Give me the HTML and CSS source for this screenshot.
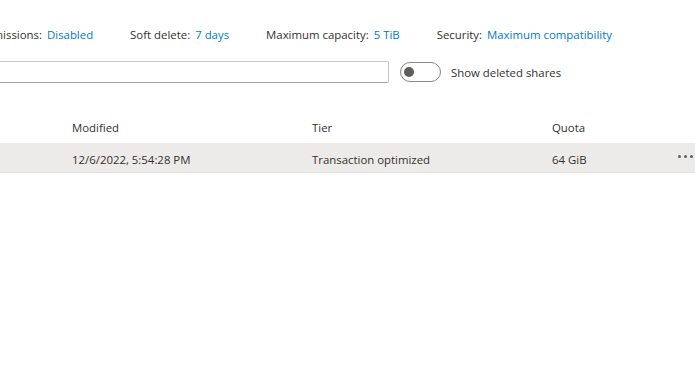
FILE: index.html
```html
<!DOCTYPE html>
<html lang="en">
<head>
    <meta charset="UTF-8">
    <meta name="viewport" content="width=device-width, initial-scale=1.0">
    <title>File shares</title>
    <link rel="stylesheet" href="styles.css">
</head>
<body>
    <div class="page">
        <!-- Résumé des propriétés -->
        <div class="info-row">
            <div class="info-item premier">
                <span class="label-clip"><span class="label">Default share-level permissions:</span></span>
                <a class="valeur" href="#">Disabled</a>
            </div>
            <div class="info-item">
                <span class="label">Soft delete:</span>
                <a class="valeur" href="#">7 days</a>
            </div>
            <div class="info-item">
                <span class="label">Maximum capacity:</span>
                <a class="valeur" href="#">5 TiB</a>
            </div>
            <div class="info-item">
                <span class="label">Security:</span>
                <a class="valeur" href="#">Maximum compatibility</a>
            </div>
        </div>

        <!-- Filtre + interrupteur -->
        <div class="toolbar">
            <input class="recherche" type="text" aria-label="Search file shares by prefix">
            <div class="toggle"><span class="knob"></span></div>
            <span class="toggle-label">Show deleted shares</span>
        </div>

        <!-- Grille -->
        <div class="grille">
            <div class="ligne entete">
                <div></div>
                <div>Modified</div>
                <div>Tier</div>
                <div>Quota</div>
                <div></div>
            </div>
            <div class="ligne donnees">
                <div></div>
                <div>12/6/2022, 5:54:28 PM</div>
                <div>Transaction optimized</div>
                <div>64 GiB</div>
                <div class="actions">
                    <span class="dot"></span><span class="dot"></span><span class="dot"></span>
                </div>
            </div>
        </div>
    </div>
</body>
</html>
```

FILE: styles.css
```css
/* Thème clair, style portail */
body {
    background-color: #ffffff;
    color: #323130;
    font-family: "Open Sans", "Noto Sans", Arial, sans-serif;
    font-size: 11.4px;
    margin: 0;
    padding: 0;
}

.page {
    width: 695px;
    height: 378px;
    overflow: hidden;
}

.info-row {
    display: flex;
    align-items: center;
    gap: 37px;
    height: 18px;
    margin-top: 25px;
    white-space: nowrap;
}

.info-item {
    display: flex;
    align-items: center;
    gap: 5px;
}

.label-clip {
    display: flex;
    justify-content: flex-end;
    width: 42px;
}

.valeur {
    color: #0078d4;
    text-decoration: none;
}

.toolbar {
    display: flex;
    align-items: center;
    margin-top: 18px;
    height: 22px;
}

.recherche {
    box-sizing: border-box;
    width: 399px;
    height: 22px;
    margin: 0 0 0 -10px;
    border: 1px solid #c8c6c4;
    border-bottom-color: #a19f9d;
    border-radius: 2px;
    outline: none;
}

.toggle {
    box-sizing: border-box;
    width: 41px;
    height: 20px;
    margin-left: 11px;
    border: 1px solid #8a8886;
    border-radius: 10px;
    padding: 0 3px;
    display: flex;
    align-items: center;
}

.knob {
    width: 10px;
    height: 10px;
    border-radius: 50%;
    background-color: #605e5c;
}

.toggle-label {
    margin-left: 10px;
}

.grille {
    margin-top: 29px;
}

.ligne {
    display: grid;
    grid-template-columns: 72px 240px 240px 1fr 40px;
    align-items: center;
    white-space: nowrap;
}

.entete {
    height: 31px;
}

.donnees {
    box-sizing: border-box;
    height: 30px;
    padding-top: 3px;
    background-color: #edebe9;
    border-bottom: 1px solid #e1dfdd;
}

.actions {
    display: flex;
    justify-content: flex-end;
    gap: 3px;
    padding-right: 2px;
    margin-top: -5px;
}

.dot {
    width: 3px;
    height: 3px;
    border-radius: 50%;
    background-color: #605e5c;
}
```
